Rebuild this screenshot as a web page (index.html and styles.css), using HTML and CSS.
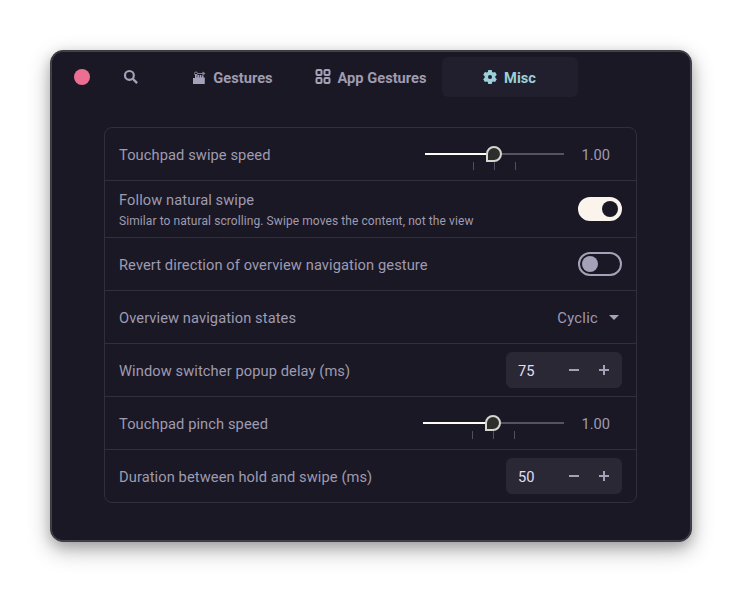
FILE: index.html
```html
<!DOCTYPE html>
<html lang="en">
<head>
<meta charset="utf-8">
<title>Gesture settings</title>
<link rel="stylesheet" href="styles.css">
</head>
<body>
<main class="window">
  <header class="header">
    <button class="close" aria-label="Close"></button>
    <svg class="search" width="16" height="16" viewBox="0 0 16 16"><circle cx="6.400" cy="6.400" r="4.400" fill="none" stroke="currentColor" stroke-width="2.200"/><path d="M9.500 9.500l4.600 4.600" stroke="currentColor" stroke-width="2.400"/></svg>
    <nav class="tabs">
      <a class="tab">
        <svg width="16" height="16" viewBox="0 0 16 16"><path fill="currentColor" d="M2 15V9h2V5h1.700v3.500h.6V6H8v2.500h.6V6h1.700v2.500h.6V6.500h1.600V8.500h1.300V15z"/><circle cx="5" cy="4.500" r="1.500" fill="none" stroke="currentColor" opacity=".75"/><path d="M7 4.500h6M11.500 3l2 1.500-2 1.500" fill="none" stroke="currentColor" stroke-width="1.200" opacity=".75"/></svg>
        <span>Gestures</span>
      </a>
      <a class="tab">
        <svg width="16" height="16" viewBox="0 0 16 16" fill="none" stroke="currentColor" stroke-width="2"><rect x="1.500" y="1" width="5" height="5" rx="1"/><rect x="9.500" y="1" width="5" height="5" rx="1"/><rect x="1.500" y="9" width="5" height="5" rx="1"/><rect x="9.500" y="9" width="5" height="5" rx="1"/></svg>
        <span>App Gestures</span>
      </a>
      <a class="tab active">
        <svg class="gear" width="16" height="16" viewBox="0 0 16 16"><path fill="currentColor" fill-rule="evenodd" d="M6.300 1h3.400l.5 2 .9.500 2-.6 1.700 2.900L13.300 7.300v1.400l1.500 1.500-1.700 2.900-2-.6-.9.500-.5 2H6.300l-.5-2-.9-.5-2 .6-1.700-2.900 1.500-1.500V7.300L1.200 5.800l1.700-2.900 2 .6.900-.5zM8 6a2 2 0 1 0 0 4 2 2 0 0 0 0-4z"/></svg>
        <span>Misc</span>
      </a>
    </nav>
  </header>
  <section class="card">
    <div class="row">
      <span class="label">Touchpad swipe speed</span>
      <svg class="slider" width="142" height="52" viewBox="0 0 142 52"><path d="M3 26h69" stroke="#fffaf3" stroke-width="2"/><path d="M72 26h70" stroke="#56525f" stroke-width="2"/><path d="M51.500 34v8M72.500 34v8M93.500 34v8" stroke="#524f60"/><path d="M65 33V26a7 7 0 1 1 7 7z" fill="#2d2e2c" stroke="#d5d6d0" stroke-width="2"/></svg>
      <span class="value">1.00</span>
    </div>
    <div class="row tall">
      <div class="copy"><span class="label">Follow natural swipe</span><span class="hint">Similar to natural scrolling. Swipe moves the content, not the view</span></div>
      <span class="switch on"></span>
    </div>
    <div class="row">
      <span class="label">Revert direction of overview navigation gesture</span>
      <span class="switch"></span>
    </div>
    <div class="row">
      <span class="label">Overview navigation states</span>
      <span class="select">Cyclic <i class="caret"></i></span>
    </div>
    <div class="row">
      <span class="label">Window switcher popup delay (ms)</span>
      <div class="spin"><span>75</span><svg width="42" height="12" viewBox="0 0 42 12" stroke="currentColor" stroke-width="2"><path d="M1 6h10M31 6h10M36 1v10"/></svg></div>
    </div>
    <div class="row">
      <span class="label">Touchpad pinch speed</span>
      <svg class="slider" width="142" height="52" viewBox="0 0 142 52"><path d="M1 26h70" stroke="#fffaf3" stroke-width="2"/><path d="M71 26h71" stroke="#56525f" stroke-width="2"/><path d="M50.500 34v8M71.500 34v8M92.500 34v8" stroke="#524f60"/><path d="M64 33V26a7 7 0 1 1 7 7z" fill="#2d2e2c" stroke="#d5d6d0" stroke-width="2"/></svg>
      <span class="value">1.00</span>
    </div>
    <div class="row">
      <span class="label">Duration between hold and swipe (ms)</span>
      <div class="spin"><span>50</span><svg width="42" height="12" viewBox="0 0 42 12" stroke="currentColor" stroke-width="2"><path d="M1 6h10M31 6h10M36 1v10"/></svg></div>
    </div>
  </section>
</main>
</body>
</html>
```
FILE: styles.css
```css
* { box-sizing: border-box; }
body {
  margin: 0;
  padding: 50px;
  background: #fff;
  color: #a5a1b8;
  font: 14.67px/20px Roboto, sans-serif;
}
svg { display: block; flex: none; }
.window {
  width: 642px;
  height: 492px;
  border: 1px solid #3c3d40;
  border-radius: 13px;
  background: #1a1824;
  box-shadow: inset 0 0 0 1px #43414c, 0 8px 22px rgba(0, 0, 0, .3), 0 4px 12px rgba(0, 0, 0, .16);
}
.header {
  display: flex;
  align-items: center;
  height: 52px;
  padding-left: 23px;
}
.close {
  width: 16px;
  height: 16px;
  padding: 0;
  border: 0;
  border-radius: 50%;
  background: #eb6f92;
}
.search { margin-left: 33px; }
.tabs { display: flex; gap: 3px; margin-left: 25px; }
.tab {
  display: flex;
  align-items: center;
  justify-content: center;
  gap: 6px;
  width: 136px;
  height: 40px;
  border-radius: 6px;
  font-weight: 700;
}
.tab span { padding-top: 2px; color: #9f9bb1; }
.active { padding-right: 2px; background: #211e2d; color: #9ccfd8; }
.active span { color: inherit; }
.card {
  width: 533px;
  margin: 24px 0 0 53px;
  border: 1px solid #312f3c;
  border-radius: 8px;
  letter-spacing: .09px;
}
.row {
  display: flex;
  align-items: center;
  height: 53px;
  padding: 0 14px;
  border-bottom: 1px solid #312f3c;
}
.row:last-child { height: 52px; border-bottom: 0; }
.tall { height: 57px; }
.label { flex: 1; padding-top: 2px; color: #9f9bb1; }
.copy { display: flex; flex: 1; flex-direction: column; padding-top: 2px; }
.copy .label { flex: none; height: 21px; padding-top: 1px; }
.hint { height: 21px; padding-top: 1px; color: #9f9bb1; font-size: 12px; letter-spacing: .083px; line-height: 20px; }
.value { width: 58px; padding: 2px 12px 0 0; color: #9f9bb1; letter-spacing: -.05px; text-align: right; }
.switch {
  width: 44px;
  height: 24px;
  padding: 2px;
  border: 2px solid #a5a1b8;
  border-radius: 12px;
}
.switch::before {
  content: "";
  display: block;
  width: 16px;
  height: 16px;
  border-radius: 50%;
  background: #a5a1b8;
}
.on { border-color: #faf4ed; background: #faf4ed; }
.on::before { margin-left: 20px; background: #1a1824; }
.select { display: flex; align-items: center; gap: 11px; padding: 2px 3px 0 0; color: #9f9bb1; letter-spacing: .3px; }
.caret {
  margin-top: -2px;
  border: solid transparent;
  border-width: 5px 5px 0;
  border-top-color: #a5a1b8;
}
.spin {
  display: flex;
  align-items: center;
  justify-content: space-between;
  width: 116px;
  height: 36px;
  padding: 0 12px;
  border-radius: 6px;
  background: #2a2835;
}
.spin span { padding-top: 2px; color: #e0def4; }
```
